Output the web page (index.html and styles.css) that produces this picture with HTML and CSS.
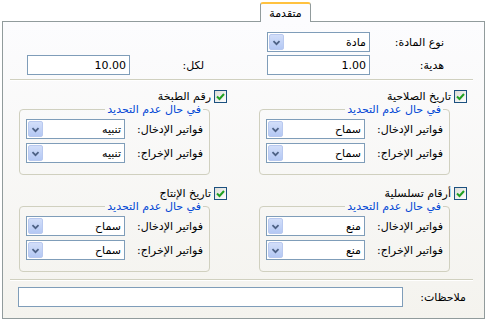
FILE: index.html
```html
<!DOCTYPE html>
<html lang="ar" dir="rtl">

<head>
    <meta charset="UTF-8">
    <title>متقدمة</title>
    <link rel="stylesheet" href="styles.css">
</head>

<body>
    <div class="tabs">
        <div class="tab">متقدمة</div>
    </div>

    <div class="panel">
        <!-- نوع المادة / هدية / لكل -->
        <div class="top">
            <div class="field">
                <span class="lbl">نوع المادة:</span>
                <div class="combo"><span class="val">مادة</span><span class="btn"><svg width="15" height="15" viewBox="0 0 15 15"><path d="M4 6 L7.5 9.5 L11 6" fill="none" stroke="#4d6185" stroke-width="2"/></svg></span></div>
            </div>
            <div></div>
            <div class="field">
                <span class="lbl">هدية:</span>
                <div class="input">1.00</div>
            </div>
            <div class="field">
                <span class="lbl">لكل:</span>
                <div class="input">10.00</div>
            </div>
        </div>

        <div class="sep"></div>

        <div class="groups">
            <div class="group">
                <div class="check"><span class="box"><svg width="11" height="11" viewBox="0 0 11 11"><path d="M2 5.5 L4.5 8 L9 3" fill="none" stroke="#21a121" stroke-width="2"/></svg></span>تاريخ الصلاحية</div>
                <fieldset>
                    <legend>في حال عدم التحديد</legend>
                    <div class="row"><span class="lbl2">فواتير الإدخال:</span><div class="combo"><span class="val">سماح</span><span class="btn"><svg width="15" height="15" viewBox="0 0 15 15"><path d="M4 6 L7.5 9.5 L11 6" fill="none" stroke="#4d6185" stroke-width="2"/></svg></span></div></div>
                    <div class="row"><span class="lbl2">فواتير الإخراج:</span><div class="combo"><span class="val">سماح</span><span class="btn"><svg width="15" height="15" viewBox="0 0 15 15"><path d="M4 6 L7.5 9.5 L11 6" fill="none" stroke="#4d6185" stroke-width="2"/></svg></span></div></div>
                </fieldset>
            </div>

            <div class="group">
                <div class="check"><span class="box"><svg width="11" height="11" viewBox="0 0 11 11"><path d="M2 5.5 L4.5 8 L9 3" fill="none" stroke="#21a121" stroke-width="2"/></svg></span>رقم الطبخة</div>
                <fieldset>
                    <legend>في حال عدم التحديد</legend>
                    <div class="row"><span class="lbl2">فواتير الإدخال:</span><div class="combo"><span class="val">تنبيه</span><span class="btn"><svg width="15" height="15" viewBox="0 0 15 15"><path d="M4 6 L7.5 9.5 L11 6" fill="none" stroke="#4d6185" stroke-width="2"/></svg></span></div></div>
                    <div class="row"><span class="lbl2">فواتير الإخراج:</span><div class="combo"><span class="val">تنبيه</span><span class="btn"><svg width="15" height="15" viewBox="0 0 15 15"><path d="M4 6 L7.5 9.5 L11 6" fill="none" stroke="#4d6185" stroke-width="2"/></svg></span></div></div>
                </fieldset>
            </div>

            <div class="group">
                <div class="check"><span class="box"><svg width="11" height="11" viewBox="0 0 11 11"><path d="M2 5.5 L4.5 8 L9 3" fill="none" stroke="#21a121" stroke-width="2"/></svg></span>أرقام تسلسلية</div>
                <fieldset>
                    <legend>في حال عدم التحديد</legend>
                    <div class="row"><span class="lbl2">فواتير الإدخال:</span><div class="combo"><span class="val">منع</span><span class="btn"><svg width="15" height="15" viewBox="0 0 15 15"><path d="M4 6 L7.5 9.5 L11 6" fill="none" stroke="#4d6185" stroke-width="2"/></svg></span></div></div>
                    <div class="row"><span class="lbl2">فواتير الإخراج:</span><div class="combo"><span class="val">منع</span><span class="btn"><svg width="15" height="15" viewBox="0 0 15 15"><path d="M4 6 L7.5 9.5 L11 6" fill="none" stroke="#4d6185" stroke-width="2"/></svg></span></div></div>
                </fieldset>
            </div>

            <div class="group">
                <div class="check"><span class="box"><svg width="11" height="11" viewBox="0 0 11 11"><path d="M2 5.5 L4.5 8 L9 3" fill="none" stroke="#21a121" stroke-width="2"/></svg></span>تاريخ الإنتاج</div>
                <fieldset>
                    <legend>في حال عدم التحديد</legend>
                    <div class="row"><span class="lbl2">فواتير الإدخال:</span><div class="combo"><span class="val">سماح</span><span class="btn"><svg width="15" height="15" viewBox="0 0 15 15"><path d="M4 6 L7.5 9.5 L11 6" fill="none" stroke="#4d6185" stroke-width="2"/></svg></span></div></div>
                    <div class="row"><span class="lbl2">فواتير الإخراج:</span><div class="combo"><span class="val">سماح</span><span class="btn"><svg width="15" height="15" viewBox="0 0 15 15"><path d="M4 6 L7.5 9.5 L11 6" fill="none" stroke="#4d6185" stroke-width="2"/></svg></span></div></div>
                </fieldset>
            </div>
        </div>

        <div class="sep sep2"></div>

        <div class="notes">
            <span class="lbl3">ملاحظات:</span>
            <div class="input wide"></div>
        </div>
    </div>
</body>

</html>
```

FILE: styles.css
```css
* {
    margin: 0;
    padding: 0;
    box-sizing: border-box;
}

body {
    background: #fff;
    color: #000;
    font-family: "DejaVu Sans", "Noto Sans", sans-serif;
    font-size: 11px;
    line-height: 13px;
}

.tabs {
    display: flex;
    height: 21px;
    padding-right: 177px;
    align-items: flex-end;
}

.tab {
    position: relative;
    z-index: 1;
    width: 51px;
    height: 20px;
    margin-bottom: -1px;
    padding-top: 3px;
    text-align: center;
    background: #fcfcfe;
    border: 1px solid #919b9c;
    border-top: 2px solid #ffc13f;
    border-bottom: none;
    border-radius: 3px 3px 0 0;
}

.panel {
    margin: 0 3px 0 2px;
    padding: 10px 0 11px 0;
    border: 1px solid #919b9c;
    background: linear-gradient(#fcfcfe, #f4f3ee);
}

.top {
    display: grid;
    grid-template-columns: 240px 240px;
    row-gap: 3px;
}

.field {
    display: flex;
    align-items: center;
    padding-right: 40px;
}

.lbl {
    width: 74px;
}

.combo {
    display: flex;
    width: 103px;
    height: 20px;
    align-items: center;
    background: #fff;
    border: 1px solid #7f9db9;
}

.combo .val {
    flex: 1;
    padding-right: 3px;
}

.combo .btn {
    display: flex;
    width: 15px;
    height: 16px;
    margin-left: 1px;
    border-radius: 2px;
    border: 1px solid #b9c9ef;
    background: linear-gradient(#d2def9, #b4c8f4);
}

.input {
    width: 103px;
    height: 20px;
    padding: 3px 3px 0 0;
    direction: ltr;
    text-align: right;
    background: #fff;
    border: 1px solid #7f9db9;
}

.sep {
    height: 2px;
    margin: 4px 11px 0 7px;
    border-top: 1px solid #d0d0bf;
    border-bottom: 1px solid #fff;
}

.groups {
    display: grid;
    grid-template-columns: 240px 240px;
    row-gap: 12px;
    margin-top: 9px;
}

.check {
    display: flex;
    height: 13px;
    align-items: center;
    margin-right: 17px;
}

.box {
    display: flex;
    width: 13px;
    height: 13px;
    margin-left: 3px;
    align-items: center;
    justify-content: center;
    border: 1px solid #1c5180;
    background: linear-gradient(135deg, #dcdcd7, #fff);
}

fieldset {
    width: 191px;
    margin-right: 34px;
    padding: 3px 6px 11px 6px;
    border: 1px solid #d0d0bf;
    border-radius: 4px;
}

legend {
    margin-right: 0;
    padding: 0 2px;
    color: #0046d5;
}

.row {
    display: flex;
    align-items: center;
}

.row + .row {
    margin-top: 4px;
}

.lbl2 {
    width: 78px;
}

fieldset .combo {
    width: 99px;
}

.sep2 {
    margin-top: 7px;
}

.notes {
    display: flex;
    align-items: center;
    margin-top: 6px;
    padding-right: 18px;
}

.lbl3 {
    width: 63px;
}

.input.wide {
    width: 385px;
}
```
